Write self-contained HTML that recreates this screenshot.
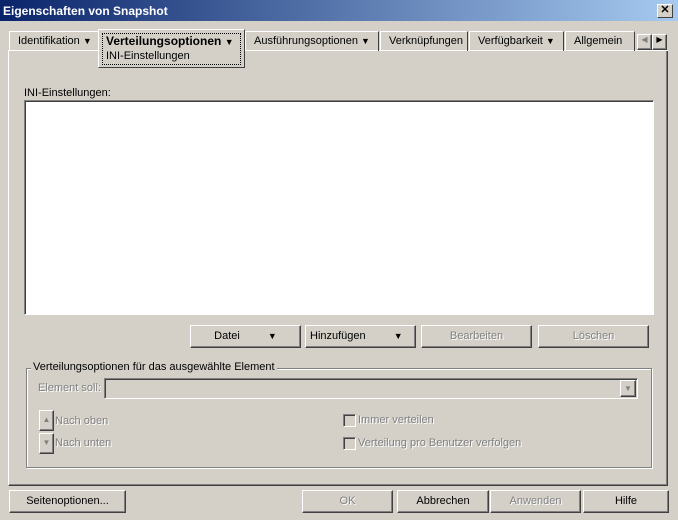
<html><head><style>
body{margin:0;width:678px;height:520px;background:#d4d0c8;font-family:"Liberation Sans",sans-serif;font-size:11px;position:relative;overflow:hidden;color:#000}
div,span{position:absolute;box-sizing:border-box}
.title{left:0;top:0;width:678px;height:21px;background:linear-gradient(90deg,#0a246a,#a6caf0);color:#fff;font-weight:bold;font-size:12px;padding:4px 3px}
.x{left:657px;top:4px;width:16px;height:14px;background:#d4d0c8;border:1px solid;border-color:#fff #404040 #404040 #fff;color:#000;font-size:11px;text-align:center;line-height:11px;font-weight:bold}
.rb{border:1px solid;border-color:#fff #404040 #404040 #fff;box-shadow:inset -1px -1px #808080}
.sk{border:1px solid;border-color:#808080 #fff #fff #808080;box-shadow:inset 1px 1px #404040}
.tab{top:31px;height:20px;border:1px solid;border-bottom:none;border-color:#fff #404040 #404040 #fff;padding:3px 8px;white-space:nowrap}
.btn{height:23px;text-align:center;line-height:20px}
.dis{color:#808080;text-shadow:1px 1px #fff}
.tri{font-size:9px}
</style></head><body>
<div class="title">Eigenschaften von Snapshot</div>
<div class="x">✕</div>
<div class="rb" style="left:8px;top:50px;width:660px;height:436px;border-top:none"></div>
<div style="left:8px;top:50px;width:660px;height:1px;background:#fff"></div>
<div class="tab" style="left:9px;width:90px">Identifikation <span class="tri" style="position:static">▼</span></div>
<div class="tab" style="left:245px;width:134px">Ausführungsoptionen <span class="tri" style="position:static">▼</span></div>
<div class="tab" style="left:380px;width:88px">Verknüpfungen</div>
<div class="tab" style="left:469px;width:95px">Verfügbarkeit <span class="tri" style="position:static">▼</span></div>
<div class="tab" style="left:565px;width:70px">Allgemein</div>
<div class="rb" style="left:637px;top:34px;width:15px;height:16px;font-size:8px;text-align:center;color:#808080">◀</div>
<div class="rb" style="left:652px;top:34px;width:15px;height:16px;font-size:8px;text-align:center">▶</div>
<div style="left:98px;top:29px;width:147px;height:39px;background:#d4d0c8;border:1px solid;border-color:#fff #404040 #404040 #fff"></div>
<div style="left:102px;top:33px;width:139px;height:32px;border:1px dotted #000"></div>
<div style="left:106px;top:34px;font-weight:bold;font-size:12px">Verteilungsoptionen <span class="tri" style="position:static">▼</span></div>
<div style="left:106px;top:50px">INI-Einstellungen</div>
<div style="left:24px;top:87px">INI-Einstellungen:</div>
<div class="sk" style="left:24px;top:100px;width:630px;height:215px;background:#fff"></div>
<div class="rb btn" style="left:190px;top:325px;width:111px">Datei <span class="tri" style="position:static;margin-left:25px">▼</span></div>
<div class="rb btn" style="left:305px;top:325px;width:111px;text-align:left;padding-left:4px">Hinzufügen <span class="tri" style="position:static;margin-left:25px">▼</span></div>
<div class="rb btn dis" style="left:421px;top:325px;width:111px">Bearbeiten</div>
<div class="rb btn dis" style="left:538px;top:325px;width:111px">Löschen</div>
<div style="left:26px;top:368px;width:626px;height:100px;border:1px solid #808080;box-shadow:1px 1px #fff,inset 1px 1px #fff"></div>
<div style="left:31px;top:361px;background:#d4d0c8;padding:0 2px">Verteilungsoptionen für das ausgewählte Element</div>
<div class="dis" style="left:38px;top:382px">Element soll:</div>
<div class="sk" style="left:104px;top:378px;width:534px;height:21px"></div>
<div class="rb" style="left:620px;top:380px;width:16px;height:17px;font-size:8px;text-align:center;color:#808080;line-height:15px">▼</div>
<div class="rb" style="left:39px;top:410px;width:15px;height:21px;font-size:8px;color:#808080;text-align:center;line-height:18px">▲</div>
<div class="rb" style="left:39px;top:433px;width:15px;height:21px;font-size:8px;color:#808080;text-align:center;line-height:18px">▼</div>
<div class="dis" style="left:55px;top:415px">Nach oben</div>
<div class="dis" style="left:55px;top:437px">Nach unten</div>
<div class="sk" style="left:343px;top:414px;width:13px;height:13px"></div>
<div class="sk" style="left:343px;top:437px;width:13px;height:13px"></div>
<div class="dis" style="left:358px;top:414px">Immer verteilen</div>
<div class="dis" style="left:358px;top:437px">Verteilung pro Benutzer verfolgen</div>
<div class="rb btn" style="left:9px;top:490px;width:117px">Seitenoptionen...</div>
<div class="rb btn dis" style="left:302px;top:490px;width:91px">OK</div>
<div class="rb btn" style="left:397px;top:490px;width:92px">Abbrechen</div>
<div class="rb btn dis" style="left:490px;top:490px;width:91px">Anwenden</div>
<div class="rb btn" style="left:583px;top:490px;width:86px">Hilfe</div>
</body></html>
